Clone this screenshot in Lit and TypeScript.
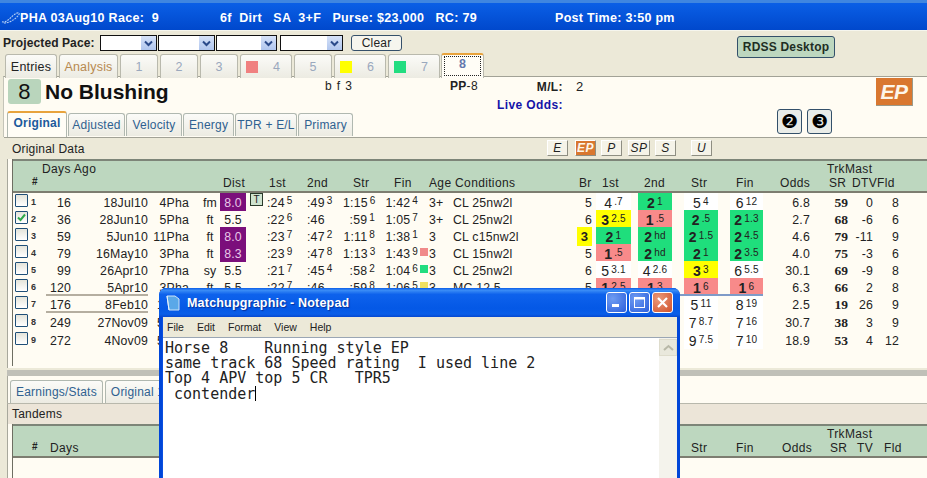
import { LitElement, css, html, nothing } from 'lit';
import { customElement } from 'lit/decorators.js';

type Tone = '' | 'g' | 'r' | 'y';
type Box = [string, string, Tone] | null;

interface Run {
  n: number;
  days: string;
  date: string;
  race: string;
  surf?: string;
  dist?: string;
  hi?: boolean;
  t?: boolean;
  first?: [string, string];
  second?: [string, string];
  str?: [string, string];
  fin?: [string, string];
  sq?: string;
  age?: string;
  cond?: string;
  br?: string;
  brHi?: boolean;
  boxes: Box[];
  odds: string;
  sr: string;
  dtv: string;
  fld: string;
  checked?: boolean;
  sel?: boolean;
  cut?: boolean;
}

const RUNS: Run[] = [
  { n: 1, days: '16', date: '18Jul10', race: '4Pha', surf: 'fm', dist: '8.0', hi: true, t: true, first: [':24', '5'], second: [':49', '3'], str: ['1:15', '6'], fin: ['1:42', '4'], age: '3+', cond: 'CL 25nw2l', br: '5',
    boxes: [['4', '.7', ''], ['2', '1', 'g'], ['5', '4', ''], ['6', '12', '']], odds: '6.8', sr: '59', dtv: '0', fld: '8' },
  { n: 2, days: '36', date: '28Jun10', race: '5Pha', surf: 'ft', dist: '5.5', first: [':22', '6'], second: [':46', ''], str: [':59', '1'], fin: ['1:05', '7'], age: '3+', cond: 'CL 25nw2l', br: '6', checked: true,
    boxes: [['3', '2.5', 'y'], ['1', '.5', 'r'], ['2', '.5', 'g'], ['2', '1.3', 'g']], odds: '2.7', sr: '68', dtv: '-6', fld: '6' },
  { n: 3, days: '59', date: '5Jun10', race: '11Pha', surf: 'ft', dist: '8.0', hi: true, first: [':23', '7'], second: [':47', '2'], str: ['1:11', '8'], fin: ['1:38', '1'], age: '3', cond: 'CL c15nw2l', br: '3', brHi: true,
    boxes: [['2', '1', 'g'], ['2', 'hd', 'g'], ['2', '1.5', 'g'], ['2', '4.5', 'g']], odds: '4.6', sr: '79', dtv: '-11', fld: '9' },
  { n: 4, days: '79', date: '16May10', race: '3Pha', surf: 'ft', dist: '8.3', hi: true, first: [':23', '9'], second: [':47', '8'], str: ['1:13', '3'], fin: ['1:43', '9'], sq: '#f08a8a', age: '3', cond: 'CL 15nw2l', br: '5',
    boxes: [['1', '.5', 'r'], ['2', 'hd', 'g'], ['2', '1', 'g'], ['2', '3.5', 'g']], odds: '4.0', sr: '75', dtv: '-3', fld: '6' },
  { n: 5, days: '99', date: '26Apr10', race: '7Pha', surf: 'sy', dist: '5.5', first: [':21', '7'], second: [':45', '4'], str: [':58', '2'], fin: ['1:04', '6'], sq: '#22dd80', age: '3', cond: 'CL 25nw2l', br: '6',
    boxes: [['5', '3.1', ''], ['4', '2.6', ''], ['3', '3', 'y'], ['6', '5.5', '']], odds: '30.1', sr: '69', dtv: '-9', fld: '8' },
  { n: 6, days: '120', date: '5Apr10', race: '3Pha', surf: 'ft', dist: '5.5', first: [':22', '7'], second: [':46', ''], str: [':59', '8'], fin: ['1:06', '5'], sq: '#f0e060', age: '3', cond: 'MC 12.5', br: '5',
    boxes: [['1', '2.5', 'r'], ['1', '3', 'r'], ['1', '6', 'r'], ['1', '6', 'r']], odds: '6.3', sr: '66', dtv: '2', fld: '8' },
  // the rest of these three rows sits behind the notepad window
  { n: 7, days: '176', date: '8Feb10', race: '1', cut: true, sel: true,
    boxes: [null, null, ['5', '11', ''], ['8', '19', '']], odds: '2.5', sr: '19', dtv: '26', fld: '9' },
  { n: 8, days: '249', date: '27Nov09', race: '5', cut: true,
    boxes: [null, null, ['7', '8.7', ''], ['7', '16', '']], odds: '30.7', sr: '38', dtv: '3', fld: '9' },
  { n: 9, days: '272', date: '4Nov09', race: '5', cut: true,
    boxes: [null, null, ['9', '7.5', ''], ['7', '10', '']], odds: '18.9', sr: '53', dtv: '4', fld: '12' },
];

// label, grid column (1-based), left padding inside the column, top row?
const HEAD: [string, number, number, boolean?][] = [
  ['Days Ago', 3, 2, true],
  ['Dist', 7, 6],
  ['1st', 9, 4],
  ['2nd', 10, 0],
  ['Str', 11, 10],
  ['Fin', 12, 19],
  ['Age Conditions', 14, 0],
  ['Br', 16, 2],
  ['1st', 17, 10],
  ['2nd', 18, 13],
  ['Str', 19, 19],
  ['Fin', 20, 18],
  ['Odds', 21, 17],
  ['TrkMast', 22, 17, true],
  ['SR', 22, 19],
  ['DTV', 23, 4],
  ['Fld', 24, 4],
];

const HEAD2: [string, number, number, boolean?][] = [
  ['Days', 3, 10],
  ['Str', 19, 19],
  ['Fin', 20, 18],
  ['Odds', 21, 19],
  ['TrkMast', 22, 17, true],
  ['SR', 22, 20],
  ['TV', 23, 9],
  ['Fld', 24, 11],
];

const TABS = [
  { label: 'Entries', cls: 'black', w: 52 },
  { label: 'Analysis', cls: 'tan', w: 59 },
  { label: '1', w: 38 },
  { label: '2', w: 38 },
  { label: '3', w: 38 },
  { label: '4', sq: '#f08080', w: 52 },
  { label: '5', w: 38 },
  { label: '6', sq: '#ffff00', w: 52 },
  { label: '7', sq: '#22dd80', w: 52 },
];

const SUBTABS: [string, number][] = [
  ['Adjusted', 57],
  ['Velocity', 56],
  ['Energy', 51],
  ['TPR + E/L', 62],
  ['Primary', 55],
];

const STYLES: [string, number, number][] = [
  ['E', 21, 0],
  ['EP', 21, 7],
  ['P', 21, 5],
  ['SP', 22, 6],
  ['S', 21, 5],
  ['U', 21, 15],
];

const PACE: [number, number][] = [
  [55, 1],
  [55, 1],
  [59, 3],
  [61, 1],
];

@customElement('app-root')
export class AppRoot extends LitElement {
  static styles = css`
    :host {
      display: block;
      font-family: 'Liberation Sans', Arial, sans-serif;
      font-size: 12px;
      letter-spacing: 0.2px;
      color: #222;
    }
    .app {
      position: relative;
      width: 927px;
      height: 478px;
      overflow: hidden;
      background: #ece9d8;
    }
    .title {
      height: 25px;
      padding-top: 2px;
      border-top: 3px solid #3f86e0;
      background: linear-gradient(#0a5fe6, #0048cc);
      display: flex;
      align-items: center;
      color: #fff;
      font-weight: bold;
      font-size: 12.5px;
      letter-spacing: 0.3px;
      white-space: pre;
      border-bottom: 1px solid #f6f6ee;
    }
    .title svg { margin: 0 0 0 1px; flex: none; }
    .title span { flex: none; }
    .head { display: flex; height: 45px; }
    .head-left { width: 737px; flex: none; }
    .pace { display: flex; align-items: center; height: 20px; padding: 2px 0 0 3px; }
    .pace b { width: 97px; font-size: 12px; letter-spacing: 0.1px; }
    .dd {
      height: 14px;
      border: 1px solid #111;
      background: #fff;
      display: flex;
      justify-content: flex-end;
      box-sizing: content-box;
    }
    .dd i {
      width: 15px;
      background: linear-gradient(#d6e2f8, #b0c6ee);
      display: flex;
      align-items: center;
      justify-content: center;
    }
    .clear {
      margin-left: 7px;
      width: 49px;
      height: 14px;
      border: 1px solid #35506a;
      border-radius: 3px;
      background: #f6f5ee;
      text-align: center;
      line-height: 14px;
    }
    .tabs { display: flex; height: 24px; padding-left: 5px; margin-top: 1px; align-items: flex-end; }
    .tab {
      box-sizing: border-box;
      height: 24px;
      margin-right: 2px;
      border: 1px solid #b9b9ad;
      border-bottom: none;
      border-radius: 3px 3px 0 0;
      background: linear-gradient(#fbfbf8, #ecebe2);
      display: flex;
      align-items: center;
      justify-content: center;
      color: #9aa8bd;
      font-size: 12.5px;
    }
    .tab.black { color: #222; }
    .tab.tan { color: #b88a50; }
    .tab.sq-tab { justify-content: flex-start; gap: 15px; padding-left: 5px; }
    .tab i { width: 12px; height: 12px; flex: none; }
    .tab.on {
      height: 25px;
      width: 43px;
      margin-left: -1px;
      border-top: 2px solid #e8a33c;
      background: #fffdf6;
      color: #6478ae;
      font-weight: bold;
      padding: 1px 2px 2px;
    }
    .tab.on span {
      flex: 1;
      height: 100%;
      border: 1px dotted #222;
      box-sizing: border-box;
      text-align: center;
      line-height: 15px;
    }
    .rdss {
      margin-top: 5px;
      width: 98px;
      height: 22px;
      box-sizing: border-box;
      border: 1px solid #33506a;
      border-radius: 3px;
      background: #bdd7bf;
      font-weight: bold;
      font-size: 12px;
      text-align: center;
      line-height: 20px;
      color: #1e2e24;
    }

    .panel {
      margin-left: 3px;
      height: 60px;
      background: #fffcf3;
      border-top: 1px solid #a2a296;
      border-left: 1px solid #c4c4b8;
      display: flex;
      flex-direction: column;
    }
    .info { height: 34px; display: flex; flex: none; }
    .badge {
      margin: 2px 0 0 4px;
      width: 33px;
      height: 25px;
      background: #b9d5bc;
      border-radius: 3px;
      font-size: 22px;
      color: #111;
      text-align: center;
      line-height: 26px;
    }
    .name { margin-left: 4px; width: 280px; font-size: 21px; font-weight: bold; line-height: 30px; color: #111; letter-spacing: 0; }
    .bf { width: 125px; padding-top: 2px; line-height: 15px; letter-spacing: 0.9px; font-size: 12px; }
    .pp { width: 46px; padding-top: 2px; line-height: 15px; letter-spacing: 0.3px; }
    .odds-box { text-align: right; width: 67px; flex: none; padding-top: 1px; line-height: 18px; }
    .odds-box b { display: block; white-space: nowrap; letter-spacing: 0.4px; }
    .odds-box .live { color: #1414a8; }
    .ml-v { width: 40px; padding: 1px 0 0 13px; line-height: 18px; letter-spacing: 0; font-size: 13px; }
    .ep {
      margin: 1px 14px 0 auto;
      width: 36px;
      height: 27px;
      background: #d9772f;
      color: #fdf6ea;
      font: italic bold 21px/27px 'Liberation Sans', sans-serif;
      text-align: center;
      letter-spacing: -0.5px;
      border-right: 1px solid #9a9a8a;
      border-bottom: 1px solid #9a9a8a;
      box-sizing: content-box;
    }
    .sub { display: flex; align-items: flex-end; height: 25px; flex: none; padding-left: 3px; }
    .stab {
      box-sizing: border-box;
      height: 23px;
      margin-right: 1px;
      border: 1px solid #b0b8b0;
      border-bottom: none;
      border-radius: 3px 3px 0 0;
      background: linear-gradient(#fbfbf8, #ecebe2);
      color: #2f6190;
      text-align: center;
      line-height: 22px;
    }
    .stab.on {
      width: 60px;
      height: 26px;
      margin-bottom: -1px;
      border-top: 2px solid #e8a33c;
      background: #fffdf6;
      color: #1c5a9c;
      font-weight: bold;
      line-height: 20px;
      position: relative;
      z-index: 1;
    }
    .nums { margin-left: auto; margin-right: 95px; display: flex; gap: 5px; align-self: flex-start; margin-top: -2px; }
    .num {
      box-sizing: border-box;
      width: 25px;
      height: 25px;
      border: 1px solid #33506a;
      border-radius: 3px;
      background: #e9ece8;
      color: #000;
      font: 19px/23px 'DejaVu Sans', sans-serif;
      text-align: center;
      letter-spacing: 0;
    }

    .bar {
      height: 22px;
      margin-left: 4px;
      padding-left: 8px;
      border-top: 1px solid #a2a296;
      display: flex;
      align-items: center;
      box-sizing: border-box;
    }
    .styles { display: flex; margin-left: 461px; margin-top: -2px; }
    .sty {
      box-sizing: border-box;
      height: 16px;
      background: #f5f3e8;
      border-right: 1px solid #8e8e82;
      border-bottom: 1px solid #8e8e82;
      border-top: 1px solid #fff;
      border-left: 1px solid #fff;
      font-style: italic;
      font-size: 12px;
      text-align: center;
      line-height: 14px;
      letter-spacing: 0.5px;
    }
    .sty.on { background: #d9772f; color: #fdf6ea; font-weight: bold; }

    .area {
      margin-left: 7px;
      background: #fffcf3;
      border-left: 1px solid #a8a89c;
      height: 209px;
      box-sizing: border-box;
      padding-left: 4px;
    }
    .table { height: 207px; border-left: 1px solid #6e6e62; box-sizing: border-box; }
    .grid {
      display: grid;
      grid-template-columns: 17px 10px 31px 77px 41px 28px 29px 19px 42px 36px 32px 43px 11px 24px 124px 15px 39px 41px 46px 45px 47px 38px 25px 26px;
    }
    .thead {
      height: 34px;
      box-sizing: border-box;
      border-top: 2px solid #7d8578;
      border-bottom: 2px solid #7d7d70;
      background: #bdd7bf;
      grid-template-rows: 15px 15px;
      letter-spacing: 0.35px;
    }
    .thead span { grid-row: 2; white-space: nowrap; line-height: 15px; }
    .thead span.top { grid-row: 1; line-height: 14px; padding-top: 1px; }
    .thead b { grid-row: 2; grid-column: 2; font-size: 10px; line-height: 12px; padding-left: 2px; }
    .row { height: 17px; line-height: 20px; white-space: nowrap; position: relative; font-size: 12.3px; }
    .row.tall { height: 18px; }
    .row.sel::before {
      content: '';
      position: absolute;
      left: 33px;
      width: 102px;
      top: -1px;
      bottom: 0;
      border-top: 2px solid #b5aea0;
      border-bottom: 2px solid #b5aea0;
      box-sizing: border-box;
    }
    .row.sel::after {
      content: '';
      position: absolute;
      left: 660px;
      width: 90px;
      top: -1px;
      height: 2px;
      background: #7f9bc8;
    }
    .r { text-align: right; }
    .chk {
      width: 13px;
      height: 13px;
      margin: 1px 0 0 2px;
      box-sizing: border-box;
      border: 1px solid #1f4f78;
      border-radius: 1px;
      background: linear-gradient(#e4e4da, #fff);
      display: block;
    }
    .chk svg { display: block; }
    .no { font-size: 9px; font-weight: bold; color: #333; line-height: 19px; padding-left: 1px; }
    .surf { padding-left: 14px; text-align: center; }
    .cut { padding-left: 9px; }
    .dist { margin-left: 3px; text-align: center; }
    .dist.hi { background: #7b0f7b; color: #e8c8e8; height: 18px; }
    .tbtn {
      display: block;
      width: 13px;
      height: 13px;
      margin: 0 0 0 4px;
      box-sizing: border-box;
      border: 1px solid #2a3a2a;
      background: #cfe3cf;
      font-size: 10px;
      line-height: 11px;
      text-align: center;
      letter-spacing: 0;
    }
    .t1 { padding-left: 2px; }
    .sup {
      font-size: 10px;
      line-height: 0;
      vertical-align: 3px;
      letter-spacing: 0.2px;
      padding-left: 2px;
    }
    .sq { display: block; width: 8px; height: 8px; margin: 4px 0 0 2px; }
    .br.hi { background: #ffff00; font-weight: bold; height: 19px; text-align: center; font-size: 13px; }
    .cell { text-align: center; height: 18px; background: #fff; font-size: 14px; }
    .cell.g { background: #1fde7c; font-weight: bold; }
    .cell.r { background: #f88a8a; font-weight: bold; }
    .cell.y { background: #ffff00; font-weight: bold; }
    .cell.g .sup, .cell.r .sup, .cell.y .sup { font-weight: normal; }
    .none { background: none; }
    .m1 { margin-left: 4px; }
    .m2 { margin-left: 7px; }
    .m3 { margin-left: 12px; }
    .sr { font: bold 13.5px/20px 'Liberation Serif', serif; letter-spacing: 0; }

    .split { height: 6px; margin: 2px 0 0 7px; background: #c0c0b8; }
    .lower { margin-left: 7px; height: 27px; box-sizing: border-box; background: #fffcf3; border-left: 1px solid #a8a89c; padding: 4px 0 0 2px; display: flex; }
    .ltab {
      box-sizing: border-box;
      height: 23px;
      margin-right: 2px;
      border: 1px solid #b0b8b0;
      border-bottom: none;
      border-radius: 3px 3px 0 0;
      background: linear-gradient(#fbfbf8, #ecebe2);
      color: #2f6190;
      line-height: 22px;
      padding: 0 5px;
      white-space: nowrap;
    }
    .tand {
      margin-left: 7px;
      height: 21px;
      box-sizing: border-box;
      background: #ece5d8;
      border-top: 1px solid #b8b8ac;
      border-left: 1px solid #a8a89c;
      padding-left: 4px;
      line-height: 21px;
    }
    .lowerbody {
      margin-left: 7px;
      height: 60px;
      background: #fffcf3;
      border-left: 1px solid #a8a89c;
      padding-left: 4px;
    }
    .lowerbody .table { height: 60px; }

    .np {
      position: absolute;
      left: 159px;
      top: 288px;
      width: 521px;
      height: 210px;
      box-sizing: border-box;
      background: #0a4fe0;
      border-radius: 7px 7px 0 0;
      border: 3px solid #0046d8;
      border-top: none;
      padding: 0 0 0 1px;
    }
    .np-title {
      height: 29px;
      margin: 0 -3px 0 -4px;
      padding-left: 6px;
      border-radius: 7px 7px 0 0;
      background: linear-gradient(#0a5ce8 0, #3a8cf6 8%, #0e62ec 22%, #0458e6 70%, #0a5ee8 90%, #0648d0 100%);
      display: flex;
      align-items: center;
      gap: 6px;
      color: #fff;
      font-size: 12.5px;
      font-weight: bold;
      letter-spacing: 0.2px;
      text-shadow: 1px 1px 1px #06309a;
      box-sizing: border-box;
    }
    .win { display: flex; gap: 2px; margin-left: auto; margin-right: 7px; }
    .wb {
      box-sizing: border-box;
      width: 21px;
      height: 21px;
      border: 1px solid #fff;
      border-radius: 3px;
      background: radial-gradient(circle at 30% 30%, #6e9cf2, #2c5fdc);
      display: flex;
      align-items: center;
      justify-content: center;
    }
    .wb.x { background: radial-gradient(circle at 30% 30%, #ea9a7a, #d0502a); }
    .np-menu {
      height: 20px;
      background: #ece9d8;
      display: flex;
      gap: 13px;
      padding-left: 4px;
      align-items: center;
      font-size: 10.5px;
      letter-spacing: 0;
      border-bottom: 1px solid #9aa6b4;
      box-sizing: content-box;
    }
    .np-body { display: flex; background: #fff; height: 160px; }
    pre {
      flex: 1;
      margin: 0;
      padding: 3px 0 0 2px;
      font: 15px/15px 'DejaVu Sans Mono', monospace;
      letter-spacing: 0;
      color: #222;
    }
    .caret { display: inline-block; width: 1px; height: 15px; background: #000; vertical-align: -2px; }
    .scroll { width: 18px; background: #f4f3ec; padding-top: 1px; box-sizing: border-box; }
    .scroll div {
      height: 17px;
      background: #e9e8dc;
      border: 1px solid #dedccc;
      box-sizing: border-box;
      display: flex;
      align-items: center;
      justify-content: center;
    }
  `;

  private _heads(list: [string, number, number, boolean?][]) {
    return list.map(
      ([label, col, pad, top]) => html`<span
        class=${top ? 'top' : ''}
        style="grid-column:${col};padding-left:${pad}px"
        >${label}</span
      >`,
    );
  }

  private _t(v?: [string, string], cls = '') {
    if (!v) return html`<span class=${cls}></span>`;
    return html`<span class=${cls}>${v[0]}${v[1] ? html`<span class="sup">${v[1]}</span>` : nothing}</span>`;
  }

  private _box(b: Box, m: string) {
    if (!b) return html`<span class="cell none ${m}"></span>`;
    return html`<span class="cell ${b[2]} ${m}">${b[0]}<span class="sup">${b[1]}</span></span>`;
  }

  private _row(r: Run) {
    return html`<div class="grid row ${r.sel ? 'sel' : ''} ${r.n === 7 || r.n === 8 ? 'tall' : ''}">
      <span class="chk">
        ${r.checked
          ? html`<svg width="11" height="11" viewBox="0 0 11 11"><path d="M2 5.5 4.5 8 9 2.5" fill="none" stroke="#2fa84a" stroke-width="2"/></svg>`
          : nothing}
      </span>
      <span class="no">${r.n}</span>
      <span class="r">${r.days}</span>
      <span class="r">${r.date}</span>
      <span class=${r.cut ? 'cut' : 'r'}>${r.race}</span>
      <span class="surf">${r.surf ?? ''}</span>
      <span class="dist ${r.hi ? 'hi' : ''}">${r.dist ?? ''}</span>
      ${r.t ? html`<span class="tbtn">T</span>` : html`<span></span>`}
      ${this._t(r.first, 't1')} ${this._t(r.second)} ${this._t(r.str, 'r')} ${this._t(r.fin, 'r')}
      ${r.sq ? html`<span class="sq" style="background:${r.sq}"></span>` : html`<span></span>`}
      <span>${r.age ?? ''}</span>
      <span>${r.cond ?? ''}</span>
      <span class="br r ${r.brHi ? 'hi' : ''}">${r.br ?? ''}</span>
      ${this._box(r.boxes[0], 'm1')} ${this._box(r.boxes[1], 'm2')} ${this._box(r.boxes[2], 'm3')}
      ${this._box(r.boxes[3], 'm3')}
      <span class="r">${r.odds}</span>
      <span class="r sr">${r.sr}</span>
      <span class="r">${r.dtv}</span>
      <span class="r">${r.fld}</span>
    </div>`;
  }

  render() {
    return html`<div class="app">
      <div class="title">
        <svg width="19" height="14" viewBox="0 0 20 14">
          <path d="M1 11C5 12 9 8 12 5s6-4 7-3-3 5-6 7-8 4-11 3" fill="none" stroke="#b8d0f4" stroke-width="1.2" stroke-dasharray="2 1"/>
        </svg>
        <span style="width:200px">PHA 03Aug10 Race:  9</span>
        <span style="width:335px">6f  Dirt   SA  3+F   Purse: $23,000   RC: 79</span>
        <span>Post Time: 3:50 pm</span>
      </div>

      <div class="head">
        <div class="head-left">
          <div class="pace">
            <b>Projected Pace:</b>
            ${PACE.map(
              ([w, gap]) => html`<div class="dd" style="width:${w}px;margin-right:${gap}px">
                <i><svg width="9" height="7" viewBox="0 0 9 7"><path d="M1 1.5 4.5 5 8 1.5" fill="none" stroke="#2a4a8a" stroke-width="2"/></svg></i>
              </div>`,
            )}
            <div class="clear">Clear</div>
          </div>
          <div class="tabs">
            ${TABS.map(
              (t) => html`<div class="tab ${t.cls ?? ''} ${t.sq ? 'sq-tab' : ''}" style="width:${t.w}px">
                ${t.sq ? html`<i style="background:${t.sq}"></i>` : nothing}${t.label}
              </div>`,
            )}
            <div class="tab on"><span>8</span></div>
          </div>
        </div>
        <div class="rdss">RDSS Desktop</div>
      </div>

      <div class="panel">
        <div class="info">
          <div class="badge">8</div>
          <div class="name">No Blushing</div>
          <div class="bf">b f 3</div>
          <div class="pp"><b>PP</b>-8</div>
          <div class="odds-box"><b>M/L:</b><b class="live">Live Odds:</b></div>
          <div class="ml-v">2</div>
          <div class="ep">EP</div>
        </div>
        <div class="sub">
          <div class="stab on">Original</div>
          ${SUBTABS.map(([t, w]) => html`<div class="stab" style="width:${w}px">${t}</div>`)}
          <div class="nums"><div class="num">❷</div><div class="num">❸</div></div>
        </div>
      </div>

      <div class="bar">
        <span style="width:74px;white-space:nowrap">Original Data</span>
        <div class="styles">
          ${STYLES.map(
            ([t, w, m]) => html`<div class="sty ${t === 'EP' ? 'on' : ''}" style="width:${w}px;margin-left:${m}px">${t}</div>`,
          )}
        </div>
      </div>

      <div class="area">
        <div class="table">
          <div class="grid thead">
            <b>#</b>
            ${this._heads(HEAD)}
          </div>
          ${RUNS.map((r) => this._row(r))}
        </div>
      </div>

      <div class="split"></div>
      <div class="lower">
        <div class="ltab">Earnings/Stats</div>
        <div class="ltab">Original 1</div>
      </div>
      <div class="tand">Tandems</div>
      <div class="lowerbody">
        <div class="table">
          <div class="grid thead">
            <b>#</b>
            ${this._heads(HEAD2)}
          </div>
        </div>
      </div>

      <div class="np">
        <div class="np-title">
          <svg width="16" height="17" viewBox="0 0 16 17">
            <path d="M2 2h8l4 3v11H4z" fill="#5aa8e8" stroke="#cfe4f8"/>
            <path d="M2 2l2 14" stroke="#e8f2fb" fill="none"/>
          </svg>
          Matchupgraphic - Notepad
          <div class="win">
            <div class="wb"><svg width="11" height="11" viewBox="0 0 11 11"><rect x="1" y="7" width="7" height="3" fill="#fff"/></svg></div>
            <div class="wb"><svg width="13" height="13" viewBox="0 0 13 13"><rect x="1.5" y="2" width="10" height="9.5" fill="none" stroke="#fff"/><rect x="1" y="1" width="11" height="2.5" fill="#fff"/></svg></div>
            <div class="wb x"><svg width="13" height="13" viewBox="0 0 13 13"><path d="M2 2l9 9M11 2l-9 9" stroke="#fff" stroke-width="2.2"/></svg></div>
          </div>
        </div>
        <div class="np-menu">
          <span>File</span><span>Edit</span><span>Format</span><span>View</span><span>Help</span>
        </div>
        <div class="np-body">
          <pre>Horse 8    Running style EP
same track 68 Speed rating  I used line 2
Top 4 APV top 5 CR   TPR5
 contender<span class="caret"></span></pre>
          <div class="scroll">
            <div><svg width="11" height="7" viewBox="0 0 11 7"><path d="M1 6l4.5-4L10 6" fill="none" stroke="#b8b8a8" stroke-width="2"/></svg></div>
          </div>
        </div>
      </div>
    </div>`;
  }
}
